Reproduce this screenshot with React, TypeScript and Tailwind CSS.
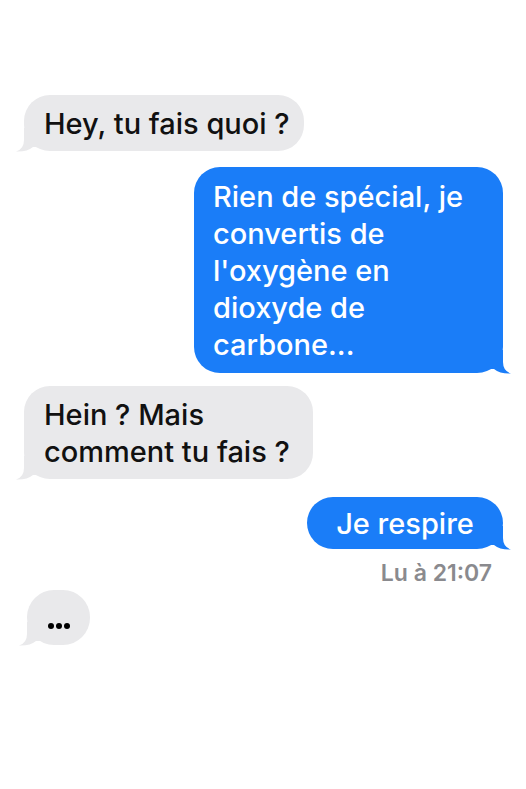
import React from "react";

function Tail({ side, color }: { side: "left" | "right"; color: string }) {
    if (side === "left") {
        return (
            <svg className="absolute left-[-8px] bottom-[-1px]" width="26" height="24" viewBox="0 0 26 24">
                <path d="M8 0 L8 12 Q8 21 0 23.5 Q11 24 17 19 L26 19 L26 0 Z" fill={color} />
            </svg>
        );
    }
    return (
        <svg className="absolute right-[-8px] bottom-[-1px]" width="26" height="24" viewBox="0 0 26 24">
            <path d="M18 0 L18 12 Q18 21 26 23.5 Q15 24 9 19 L0 19 L0 0 Z" fill={color} />
        </svg>
    );
}

function Received({ children, className }: { children: React.ReactNode; className?: string }) {
    return (
        <div className={"relative self-start ml-[24px] rounded-[26px] bg-[#e9e9eb] px-[20px] py-[9.5px] text-[29px] leading-[37px] font-medium text-[#111] whitespace-nowrap " + (className ?? "")}>
            {children}
            <Tail side="left" color="#e9e9eb" />
        </div>
    );
}

function Sent({ children, className }: { children: React.ReactNode; className?: string }) {
    return (
        <div className={"relative self-end mr-[23px] rounded-[26px] bg-[#1a7df8] text-[29px] leading-[37px] font-medium text-white whitespace-nowrap " + (className ?? "")}>
            {children}
            <Tail side="right" color="#1a7df8" />
        </div>
    );
}

export default function App() {
    return (
        <div className="w-[526px] h-[789px] bg-white flex flex-col pt-[95px] font-['Inter','Liberation_Sans',Arial,sans-serif] overflow-hidden">
            <Received className="w-[280px]">Hey, tu fais quoi ?</Received>

            <Sent className="mt-[16px] w-[309px] px-[19px] py-[10.5px]">
                Rien de spécial, je<br />
                convertis de<br />
                l'oxygène en<br />
                dioxyde de<br />
                carbone...
            </Sent>

            <Received className="mt-[13px] w-[289px]">
                Hein ? Mais<br />
                comment tu fais ?
            </Received>

            <Sent className="mt-[18px] w-[196px] py-[7.5px] text-center">Je respire</Sent>

            <div className="self-end mr-[34px] mt-[10px] text-[23px] leading-[28px] font-semibold text-[#8a8a8e]">
                Lu à 21:07
            </div>

            <div className="relative self-start ml-[27px] mt-[3px] w-[63px] h-[55px] rounded-[27px] bg-[#e9e9eb] flex justify-center gap-[2px] pt-[33px]">
                <span className="w-[6px] h-[6px] rounded-full bg-black" />
                <span className="w-[6px] h-[6px] rounded-full bg-black" />
                <span className="w-[6px] h-[6px] rounded-full bg-black" />
                <Tail side="left" color="#e9e9eb" />
            </div>
        </div>
    );
}
